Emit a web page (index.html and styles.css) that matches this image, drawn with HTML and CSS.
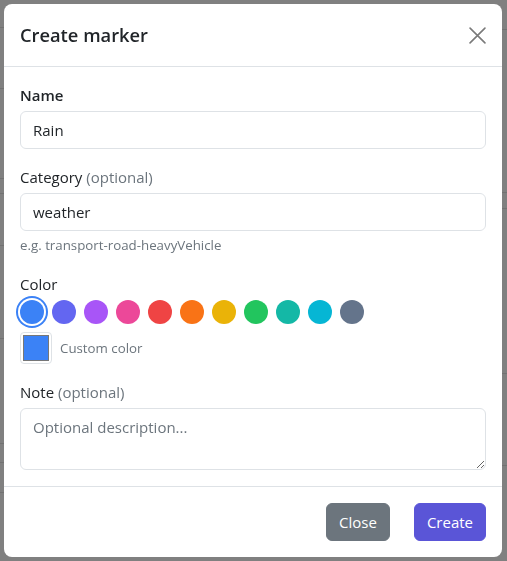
FILE: index.html
```html
<!DOCTYPE html>
<html lang="en">
<head>
<meta charset="utf-8">
<title>Create marker</title>
<link rel="stylesheet" href="styles.css">
</head>
<body>
<div class="page">
  <div class="strip strip-left"></div>
  <div class="strip strip-right"></div>
</div>
<div class="modal" role="dialog" aria-labelledby="modal-title">
  <div class="modal-header">
    <h5 class="modal-title" id="modal-title">Create marker</h5>
    <button class="btn-close" type="button" aria-label="Close">
      <svg viewBox="0 0 16 16" width="17" height="17" aria-hidden="true"><path d="M1 1L15 15M15 1L1 15" stroke="currentColor" stroke-width="1.5" stroke-linecap="round" fill="none"/></svg>
    </button>
  </div>
  <div class="modal-body">
    <div class="field">
      <label class="label label-strong" for="name">Name</label>
      <input class="control" id="name" type="text" value="Rain">
    </div>
    <div class="field">
      <label class="label" for="category">Category <span class="muted">(optional)</span></label>
      <input class="control" id="category" type="text" value="weather">
      <div class="help">e.g. transport-road-heavyVehicle</div>
    </div>
    <div class="field">
      <div class="label">Color</div>
      <div class="swatches">
        <span class="swatch sw-blue selected"></span>
        <span class="swatch sw-indigo"></span>
        <span class="swatch sw-purple"></span>
        <span class="swatch sw-pink"></span>
        <span class="swatch sw-red"></span>
        <span class="swatch sw-orange"></span>
        <span class="swatch sw-yellow"></span>
        <span class="swatch sw-green"></span>
        <span class="swatch sw-teal"></span>
        <span class="swatch sw-cyan"></span>
        <span class="swatch sw-slate"></span>
      </div>
      <div class="custom">
        <input class="color-input" type="color" value="#3b82f6" aria-label="Custom color">
        <span class="custom-text">Custom color</span>
      </div>
    </div>
    <div class="field">
      <label class="label" for="note">Note <span class="muted">(optional)</span></label>
      <textarea class="control textarea" id="note" rows="2" placeholder="Optional description..."></textarea>
    </div>
  </div>
  <div class="modal-footer">
    <button class="btn btn-secondary" type="button">Close</button>
    <button class="btn btn-primary" type="button">Create</button>
  </div>
</div>
</body>
</html>
```
FILE: styles.css
```css
* { box-sizing: border-box; }

html, body {
  margin: 0;
  width: 507px;
  height: 561px;
  overflow: hidden;
}

body {
  background: #808080;
  font-family: "Open Sans", "Noto Sans", sans-serif;
  color: #212529;
}

.page {
  display: flex;
  justify-content: space-between;
  height: 561px;
}

.strip {
  width: 6px;
  height: 100%;
}

.strip-left {
  background-image: linear-gradient(to bottom,
    transparent 27px, #727272 27px, #727272 28px, transparent 28px,
    transparent 88px, #727272 88px, #727272 89px, transparent 89px,
    transparent 178px, #727272 178px, #727272 179px, transparent 179px,
    transparent 193px, #727272 193px, #727272 194px, transparent 194px,
    transparent 245px, #727272 245px, #727272 246px, transparent 246px,
    transparent 338px, #727272 338px, #727272 339px, transparent 339px,
    transparent 443px, #727272 443px, #727272 444px, transparent 444px,
    transparent 462px, #727272 462px, #727272 463px, transparent 463px,
    transparent 492px, #727272 492px, #727272 493px, transparent 493px);
}

.strip-right {
  background-image: linear-gradient(to bottom,
    transparent 29px, #727272 29px, #727272 30px, transparent 30px,
    transparent 192px, #727272 192px, #727272 193px, transparent 193px,
    transparent 208px, #727272 208px, #727272 209px, transparent 209px,
    transparent 373px, #727272 373px, #727272 374px, transparent 374px,
    transparent 465px, #727272 465px, #727272 466px, transparent 466px);
}

.modal {
  position: fixed;
  top: 4px;
  left: 4px;
  width: 498px;
  background: #fff;
  border-radius: 8px;
  overflow: hidden;
}

.modal-header {
  display: flex;
  align-items: center;
  justify-content: space-between;
  padding: 16px;
  border-bottom: 1px solid #dee2e6;
}

.modal-title {
  margin: 0;
  font-size: 18.3px;
  font-weight: 600;
  line-height: 30px;
  color: #212529;
}

.btn-close {
  display: flex;
  align-items: center;
  justify-content: center;
  width: 17px;
  height: 17px;
  padding: 0;
  border: 0;
  background: transparent;
  color: #7a7a7a;
}

.modal-body {
  padding: 16px;
}

.field {
  margin-bottom: 16px;
}

.field:last-child {
  margin-bottom: 0;
}

.label {
  display: block;
  margin-bottom: 4px;
  font-size: 15px;
  line-height: 24px;
  color: #212529;
}

.label-strong {
  font-weight: 600;
}

.muted {
  color: #6c757d;
}

.control {
  display: block;
  width: 100%;
  padding: 6px 12px;
  font-family: inherit;
  font-size: 15px;
  line-height: 24px;
  color: #212529;
  background: #fff;
  border: 1px solid #dee2e6;
  border-radius: 6px;
  outline: none;
}

.control::placeholder {
  color: #6c757d;
}

.textarea {
  height: 62px;
  resize: vertical;
}

.help {
  margin-top: 4px;
  font-size: 13.3px;
  line-height: 21px;
  color: #6c757d;
}

.swatches {
  display: flex;
  gap: 8px;
  margin-bottom: 8px;
}

.swatch {
  width: 24px;
  height: 24px;
  border-radius: 50%;
}

.swatch.selected {
  box-shadow: 0 0 0 2px #fff, 0 0 0 4px #3b82f6;
}

.sw-blue { background: #3b82f6; }
.sw-indigo { background: #6366f1; }
.sw-purple { background: #a855f7; }
.sw-pink { background: #ec4899; }
.sw-red { background: #ef4444; }
.sw-orange { background: #f97316; }
.sw-yellow { background: #eab308; }
.sw-green { background: #22c55e; }
.sw-teal { background: #14b8a6; }
.sw-cyan { background: #06b6d4; }
.sw-slate { background: #64748b; }

.custom {
  display: flex;
  align-items: center;
  gap: 8px;
}

.color-input {
  -webkit-appearance: none;
  appearance: none;
  width: 32px;
  height: 32px;
  padding: 2px;
  margin: 0;
  border: 1px solid #dee2e6;
  border-radius: 4px;
  background: #fff;
}

.color-input::-webkit-color-swatch-wrapper {
  padding: 0;
}

.color-input::-webkit-color-swatch {
  border: 1px solid #777;
  border-radius: 0;
}

.custom-text {
  font-size: 13.3px;
  line-height: 21px;
  color: #6c757d;
}

.modal-footer {
  display: flex;
  justify-content: flex-end;
  gap: 24px;
  padding: 16px;
  border-top: 1px solid #dee2e6;
}

.btn {
  padding: 6px 12px;
  font-family: inherit;
  font-size: 15px;
  line-height: 24px;
  color: #fff;
  border: 1px solid transparent;
  border-radius: 6px;
}

.btn-secondary {
  background: #6c757d;
  border-color: #6c757d;
}

.btn-primary {
  background: #5a55d7;
  border-color: #5a55d7;
}
```
